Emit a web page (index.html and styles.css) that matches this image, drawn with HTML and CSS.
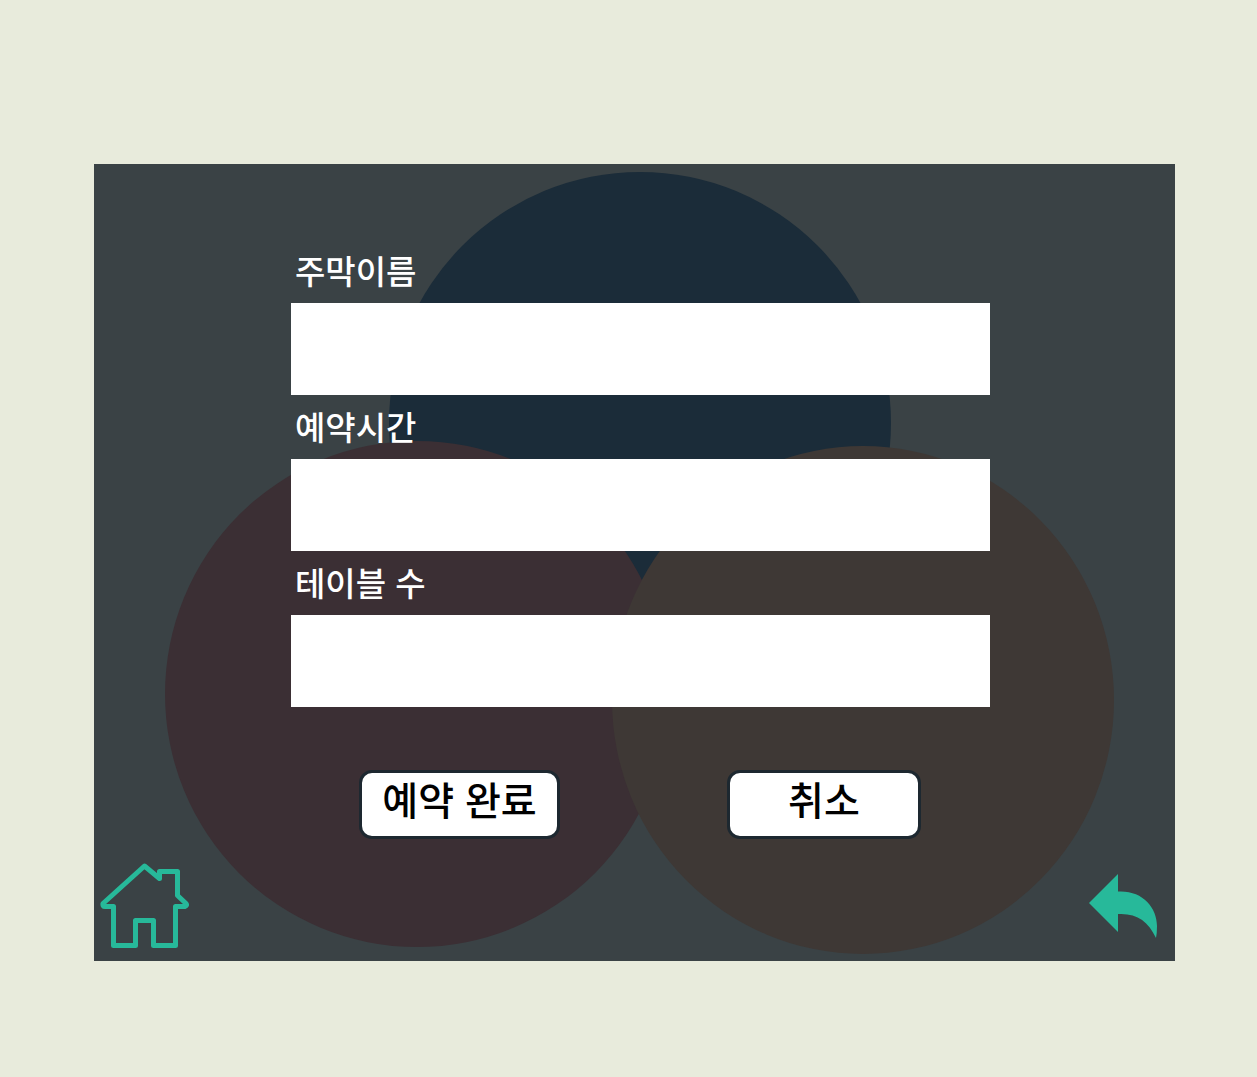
FILE: index.html
```
<!DOCTYPE html>
<html lang="ko">
<head>
<meta charset="utf-8">
<meta name="viewport" content="width=device-width, initial-scale=1">
<title>주막 예약</title>
<link rel="stylesheet" href="styles.css">
</head>
<body>
<main class="panel">
  <svg class="backdrop" viewBox="0 0 1081 797" preserveAspectRatio="none" aria-hidden="true">
    <circle class="circle-blue" cx="546" cy="259" r="251"/>
    <ellipse class="circle-red" cx="323" cy="530" rx="252" ry="253"/>
    <ellipse class="circle-brown" cx="769" cy="536" rx="251" ry="254"/>
  </svg>
  <form class="booking">
    <div class="field">
      <label for="name">주막이름</label>
      <input id="name" type="text">
    </div>
    <div class="field">
      <label for="time">예약시간</label>
      <input id="time" type="text">
    </div>
    <div class="field">
      <label for="tables">테이블 수</label>
      <input id="tables" type="text">
    </div>
    <div class="actions">
      <button class="confirm" type="submit">예약 완료</button>
      <button class="cancel" type="button">취소</button>
    </div>
  </form>
  <nav class="nav">
    <a href="#home" aria-label="홈">
      <svg class="home" width="90" height="86" viewBox="0 0 90 86"><path d="M44.5 3 3 40.5Q2.500 43.500 5 43.500H13.500V82.500H35.500V57.500H53.500V82.500H75.500V43.500H85Q87.500 42.500 86 40.500L77.500 32.500V8.500H59.500V15.500Z"/></svg>
    </a>
    <a href="#back" aria-label="뒤로">
      <svg class="back" width="69" height="65" viewBox="0 0 69 65"><path d="M0 29 29 0V17.500C53 16 68 33 68 52Q68 59 67 64C59 47 48 39 29 40V58Z"/></svg>
    </a>
  </nav>
</main>
</body>
</html>
```
FILE: styles.css
```
* {
  box-sizing: border-box;
}

body {
  margin: 0;
  padding: 164px 82px 116px 94px;
  background: #e8ebdc;
  font-family: "Noto Sans CJK KR", sans-serif;
  font-weight: 500;
}

.panel {
  position: relative;
  isolation: isolate;
  background: #3a4245;
}

.backdrop {
  position: absolute;
  inset: 0;
  z-index: -1;
  width: 100%;
  height: 100%;
}

.circle-blue {
  fill: #1b2c39;
}

.circle-red {
  fill: #3b2f34;
}

.circle-brown {
  fill: #3e3835;
}

.booking {
  display: flex;
  flex-direction: column;
  gap: 1px;
  padding: 76px 185px 0 197px;
}

.field {
  display: flex;
  flex-direction: column;
}

.field label {
  padding: 0 0 3px 4px;
  color: #fff;
  font-size: 33px;
  line-height: 60px;
}

.field input {
  width: 100%;
  height: 92px;
  padding: 0 16px;
  border: 0;
  background: #fff;
  font: inherit;
  font-size: 33px;
}

.actions {
  display: flex;
  justify-content: space-between;
  padding: 62px 69px 0 68px;
}

.actions button {
  height: 69px;
  padding: 0 0 13px;
  border: 3px solid #1d2830;
  border-radius: 13px;
  background: #fff;
  color: #000;
  font: inherit;
  font-size: 39px;
  line-height: 50px;
}

.actions .confirm {
  width: 201px;
}

.actions .cancel {
  width: 194px;
}

.nav {
  display: flex;
  align-items: center;
  justify-content: space-between;
  padding: 24px 17px 12px 6px;
}

.nav svg {
  display: block;
}

.home {
  fill: none;
  stroke: #27b99a;
  stroke-width: 5;
  stroke-linejoin: round;
}

.back {
  fill: #27b99a;
}
```
